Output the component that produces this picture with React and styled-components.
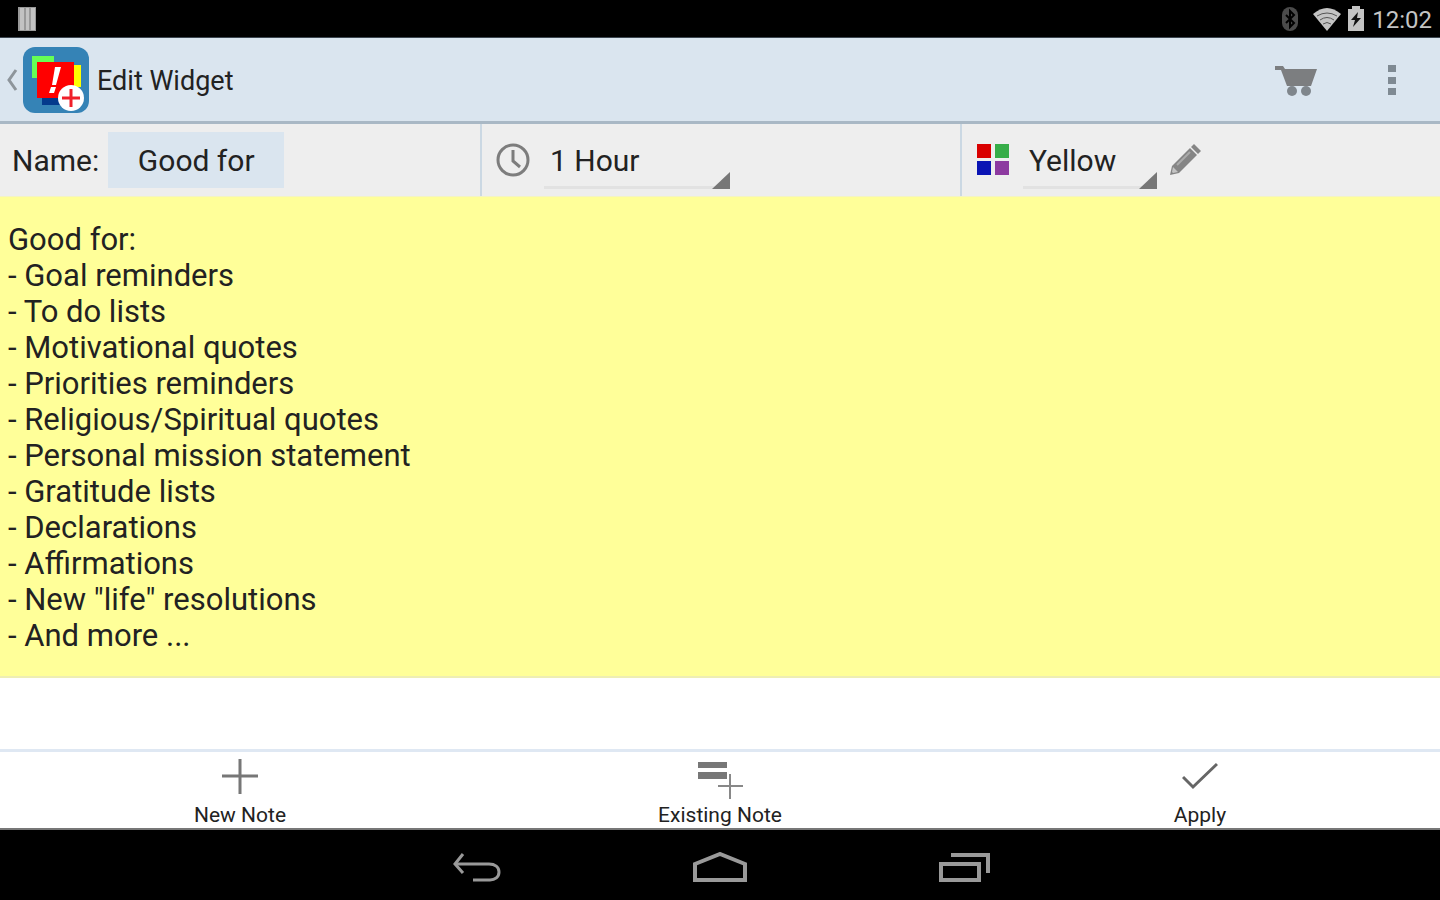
import React, { useState } from "react";
import styled, { createGlobalStyle } from "styled-components";

const GlobalStyle = createGlobalStyle`
  * {
    box-sizing: border-box;
  }

  body {
    margin: 0;
    background: #fff;
    color: #222;
    font-family: Roboto, "Liberation Sans", sans-serif;
    font-size: 30px;
  }

  button,
  input,
  select {
    margin: 0;
    padding: 0;
    border: 0;
    border-radius: 0;
    background: none;
    color: inherit;
    font: inherit;
  }

  svg {
    display: block;
    flex: none;
  }
`;

const Screen = styled.div`
  display: flex;
  flex-direction: column;
  min-height: 100vh;
`;

const StatusBar = styled.div`
  display: flex;
  align-items: center;
  gap: 6px;
  height: 38px;
  padding: 0 8px 0 16px;
  border-bottom: 1px solid #3c4650;
  background: #000;
  color: #c4c4c4;
`;

const Clock = styled.time`
  margin-left: 2px;
  padding-top: 2px;
  font-size: 24px;
  line-height: 36px;
`;

const Spacer = styled.span`
  flex: 1;
`;

const ActionBar = styled.header`
  display: flex;
  align-items: center;
  height: 86px;
  padding: 0 0 0 6px;
  border-bottom: 3px solid #a9b8c5;
  background: #dae5ef;
`;

const UpButton = styled.button`
  display: flex;
  align-items: center;
  gap: 5px;
`;

const Title = styled.h1`
  margin: 0 0 0 8px;
  padding-top: 2px;
  font-size: 27px;
  font-weight: 400;
  line-height: 36px;
`;

const ActionButton = styled.button`
  display: flex;
  align-items: center;
  justify-content: center;
  width: 96px;
  height: 72px;
`;

const Settings = styled.form`
  display: grid;
  grid-template-columns: repeat(3, 1fr);
  height: 72px;
  background: #eee;
`;

const Setting = styled.div`
  display: flex;
  align-items: center;
  padding: 0 ${({ $indent }) => $indent}px;
  border-left: ${({ $divided }) => ($divided ? "2px solid #cbd8e3" : "0")};
`;

const NameInput = styled.input`
  width: 176px;
  height: 56px;
  margin-left: 9px;
  background: #dae5ef;
  text-align: center;
`;

const Spinner = styled.div`
  position: relative;
  width: ${({ $width }) => $width}px;
  margin: 2px 0 0 14px;
`;

const SpinnerSelect = styled.select`
  width: 100%;
  height: 56px;
  padding: 2px 24px 0 6px;
  border-bottom: 3px solid #e2e2e2;
  appearance: none;
`;

const SpinnerCorner = styled.span`
  position: absolute;
  right: 0;
  bottom: 0;
  width: 18px;
  height: 17px;
  background: #777;
  clip-path: polygon(100% 0, 100% 100%, 0 100%);
  pointer-events: none;
`;

const EditButton = styled.button`
  margin-left: 12px;
`;

const Notes = styled.main`
  flex: 1;
`;

const Note = styled.article`
  padding: 25px 8px 22px;
  border-bottom: 2px solid #eeeeb4;
  border-top: 1px solid #f4f4c4;
  background: ${({ $color }) => $color};
  font-size: 31px;
  line-height: 36px;
  white-space: pre-line;
`;

const BottomBar = styled.footer`
  display: grid;
  grid-template-columns: repeat(3, 1fr);
  height: 81px;
  border-top: 3px solid #dfe8f3;
  border-bottom: 2px solid #777;
`;

const BottomButton = styled.button`
  display: flex;
  flex-direction: column;
  align-items: center;
  justify-content: flex-end;
  gap: 4px;
  font-size: 21px;
  line-height: 25px;
`;

const SystemNav = styled.nav`
  display: flex;
  justify-content: center;
  height: 70px;
  padding-top: 4px;
  background: #000;
`;

const SystemButton = styled.button`
  display: flex;
  align-items: center;
  justify-content: center;
  width: 244px;
`;

const COLORS = {
  Yellow: "#ffff99",
  Green: "#ccff99",
  Blue: "#99ccff",
};

const INTERVALS = ["1 Hour", "2 Hours", "1 Day"];

const NOTE = `Good for:
- Goal reminders
- To do lists
- Motivational quotes
- Priorities reminders
- Religious/Spiritual quotes
- Personal mission statement
- Gratitude lists
- Declarations
- Affirmations
- New "life" resolutions
- And more ...`;

function NotificationIcon() {
  return (
    <svg width="22" height="24" viewBox="0 0 22 24">
      <path d="M2 0h18v24H2z" fill="#999" />
      <path d="M4 1h4v22H4zM10 1h3v22h-3zM15 1h4v22h-4z" fill="#c2c2c2" />
    </svg>
  );
}

function BluetoothIcon() {
  return (
    <svg width="25" height="26" viewBox="0 0 25 26">
      <rect x="1" y="1" width="16" height="24" rx="8" fill="#4b4b4b" />
      <path
        d="M5 9l8 8-4 4V5l4 4-8 8"
        fill="none"
        stroke="#000"
        strokeWidth="2"
      />
    </svg>
  );
}

function WifiIcon() {
  return (
    <svg width="30" height="24" viewBox="0 0 30 24">
      <path d="M1 7Q15-5 29 7L15 24z" fill="#c4c4c4" />
      <path
        d="M5 9Q15 3 25 9M8 13Q15 8 22 13M11 17Q15 14 19 17"
        fill="none"
        stroke="#555"
        strokeWidth="1"
      />
    </svg>
  );
}

function BatteryIcon() {
  return (
    <svg width="16" height="26" viewBox="0 0 16 26">
      <path d="M4 0h8v3h4v22H0V3h4z" fill="#c4c4c4" />
      <path d="M10 6L3 14h4l-2 7 8-9H9z" fill="#111" />
    </svg>
  );
}

function BackChevron() {
  return (
    <svg width="12" height="24" viewBox="0 0 12 24">
      <path d="M10 2L3 12l7 10" fill="none" stroke="#8d959b" strokeWidth="3" />
    </svg>
  );
}

function AppLogo() {
  return (
    <svg width="66" height="66" viewBox="0 0 66 66">
      <rect width="66" height="66" rx="12" fill="#3583b6" />
      <path d="M9 9h22v22H9z" fill="#66ff55" />
      <path d="M38 18h20v22H38z" fill="#ff0" />
      <path d="M19 40h22v18H19z" fill="#043a8c" />
      <path d="M14 15h37v36H14z" fill="#f00" />
      <path d="M32 20h6l-5 18h-4zM28 40h5l-2 6h-5z" fill="#fff" />
      <circle cx="48" cy="51" r="13" fill="#fff" />
      <path d="M48 42v18M39 51h18" stroke="#f0202a" strokeWidth="3" />
    </svg>
  );
}

function CartIcon() {
  return (
    <svg width="42" height="32" viewBox="0 0 42 32">
      <path d="M0 2h8l2 3h32l-6 17H12L6 6H0z" fill="#7c7e80" />
      <circle cx="17" cy="27" r="5" fill="#7f868c" />
      <circle cx="31" cy="27" r="5" fill="#7f868c" />
    </svg>
  );
}

function OverflowIcon() {
  return (
    <svg width="8" height="32" viewBox="0 0 8 32">
      <path d="M0 1h8v7H0zM0 13h8v7H0zM0 24h8v7H0z" fill="#7f8a93" />
    </svg>
  );
}

function ClockIcon() {
  return (
    <svg width="34" height="34" viewBox="0 0 34 34">
      <g fill="none" stroke="#7d7d7d">
        <circle cx="17" cy="17" r="15" strokeWidth="3" />
        <path d="M17 7v11l7 6" strokeWidth="3" />
      </g>
    </svg>
  );
}

function PaletteIcon() {
  return (
    <svg width="33" height="32" viewBox="0 0 33 32">
      <path d="M1 0h14v14H1z" fill="#d90000" />
      <path d="M19 0h14v14H19z" fill="#36ad48" />
      <path d="M1 17h14v14H1z" fill="#0a14b4" />
      <path d="M19 17h14v14H19z" fill="#8d3aa0" />
    </svg>
  );
}

function PencilIcon() {
  return (
    <svg width="32" height="32" viewBox="0 0 32 32">
      <path d="M21 4l7 7L10 29l-9 2 2-9z" fill="#858585" />
      <path d="M22 3l3-3 7 7-3 3z" fill="#858585" />
      <path d="M21 8L8 21" stroke="#aaa" strokeWidth="2" />
      <path d="M4 23l5 5-5 1-1-1z" fill="#c4c4c4" />
    </svg>
  );
}

function PlusIcon() {
  return (
    <svg width="36" height="40" viewBox="0 0 36 40">
      <path d="M18 0v35M0 17h36" stroke="#777" strokeWidth="3" />
    </svg>
  );
}

function ExistingIcon() {
  return (
    <svg width="46" height="38" viewBox="0 0 46 38">
      <path d="M1 1h29v6H1zM1 11h29v7H1z" fill="#777" />
      <path d="M33 13v25M21 25h25" stroke="#888" strokeWidth="2" />
    </svg>
  );
}

function CheckIcon() {
  return (
    <svg width="36" height="40" viewBox="0 0 36 40">
      <path
        d="M1 18l10 10L35 5"
        fill="none"
        stroke="#666"
        strokeWidth="3"
      />
    </svg>
  );
}

function SystemBackIcon() {
  return (
    <svg width="50" height="30" viewBox="0 0 50 30">
      <g fill="none" stroke="#999" strokeWidth="3">
        <path d="M4 12h34c6 0 10 3 10 8s-4 8-9 8H22" />
        <path d="M12 2L4 12l8 9" />
      </g>
    </svg>
  );
}

function SystemHomeIcon() {
  return (
    <svg width="56" height="30" viewBox="0 0 56 30">
      <path
        d="M3 28V12l25-10 25 10v16z"
        fill="none"
        stroke="#999"
        strokeWidth="4"
      />
    </svg>
  );
}

function SystemRecentIcon() {
  return (
    <svg width="52" height="30" viewBox="0 0 52 30">
      <g fill="none" stroke="#999" strokeWidth="4">
        <path d="M3 12h38v16H3z" />
        <path d="M13 3h37v18" />
      </g>
    </svg>
  );
}

function SpinnerField({ label, value, options, onChange, width }) {
  return (
    <Spinner $width={width}>
      <SpinnerSelect
        aria-label={label}
        value={value}
        onChange={(e) => onChange(e.target.value)}
      >
        {options.map((option) => (
          <option key={option}>{option}</option>
        ))}
      </SpinnerSelect>
      <SpinnerCorner />
    </Spinner>
  );
}

export default function App() {
  const [name, setName] = useState("Good for");
  const [interval, setInterval] = useState("1 Hour");
  const [color, setColor] = useState("Yellow");

  return (
    <Screen>
      <GlobalStyle />
      <StatusBar>
        <NotificationIcon />
        <Spacer />
        <BluetoothIcon />
        <WifiIcon />
        <BatteryIcon />
        <Clock>12:02</Clock>
      </StatusBar>
      <ActionBar>
        <UpButton aria-label="Back">
          <BackChevron />
          <AppLogo />
        </UpButton>
        <Title>Edit Widget</Title>
        <Spacer />
        <ActionButton aria-label="Store">
          <CartIcon />
        </ActionButton>
        <ActionButton aria-label="More options">
          <OverflowIcon />
        </ActionButton>
      </ActionBar>
      <Settings onSubmit={(e) => e.preventDefault()}>
        <Setting $indent={12}>
          <label htmlFor="name">Name:</label>
          <NameInput
            id="name"
            value={name}
            onChange={(e) => setName(e.target.value)}
          />
        </Setting>
        <Setting $indent={14} $divided>
          <ClockIcon />
          <SpinnerField
            label="Interval"
            value={interval}
            options={INTERVALS}
            onChange={setInterval}
            width={186}
          />
        </Setting>
        <Setting $indent={14} $divided>
          <PaletteIcon />
          <SpinnerField
            label="Color"
            value={color}
            options={Object.keys(COLORS)}
            onChange={setColor}
            width={134}
          />
          <EditButton type="button" aria-label="Edit color">
            <PencilIcon />
          </EditButton>
        </Setting>
      </Settings>
      <Notes>
        <Note $color={COLORS[color]}>{NOTE}</Note>
      </Notes>
      <BottomBar>
        <BottomButton>
          <PlusIcon />
          New Note
        </BottomButton>
        <BottomButton>
          <ExistingIcon />
          Existing Note
        </BottomButton>
        <BottomButton>
          <CheckIcon />
          Apply
        </BottomButton>
      </BottomBar>
      <SystemNav>
        <SystemButton aria-label="Back">
          <SystemBackIcon />
        </SystemButton>
        <SystemButton aria-label="Home">
          <SystemHomeIcon />
        </SystemButton>
        <SystemButton aria-label="Recent apps">
          <SystemRecentIcon />
        </SystemButton>
      </SystemNav>
    </Screen>
  );
}
